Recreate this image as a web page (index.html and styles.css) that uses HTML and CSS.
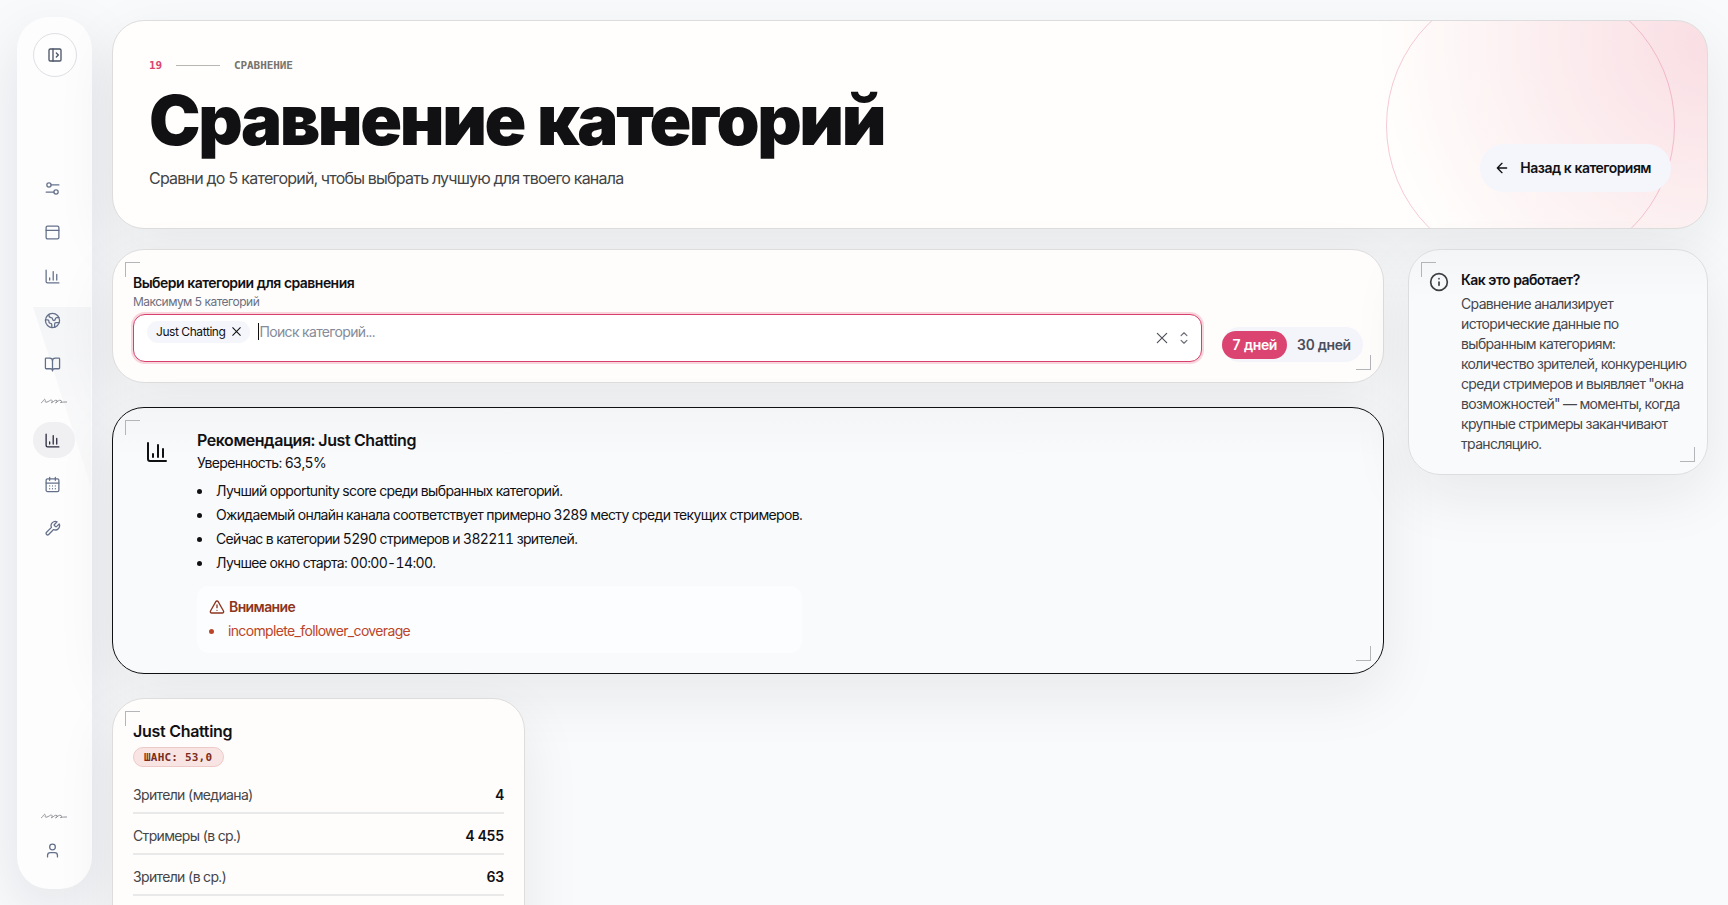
FILE: index.html
```html
<!DOCTYPE html>
<html lang="ru">
  <head>
    <meta charset="UTF-8" />
    <meta name="viewport" content="width=device-width, initial-scale=1.0" />
    <title>Сравнение категорий</title>
    <link rel="stylesheet" href="styles.css">
  </head>
  <body>
    <aside class="sidebar">
      <button class="toggle">
        <svg class="icon" viewBox="0 0 24 24"><rect x="3" y="3" width="18" height="18" rx="2" /><path d="M9 3v18M14 9l3 3-3 3" /></svg>
      </button>
      <nav class="nav">
        <a class="nav-item"><svg class="icon" viewBox="0 0 24 24"><path d="M10 7h11M3 17h11" /><circle cx="7" cy="7" r="3" /><circle cx="17" cy="17" r="3" /></svg></a>
        <a class="nav-item"><svg class="icon" viewBox="0 0 24 24"><rect x="3" y="3" width="18" height="18" rx="2" /><path d="M3 9h18" /></svg></a>
        <a class="nav-item"><svg class="icon" viewBox="0 0 24 24"><path d="M3 3v16a2 2 0 0 0 2 2h16M8 17v-3M13 17V5M18 17V9" /></svg></a>
        <a class="nav-item"><svg class="icon" viewBox="0 0 24 24"><path d="M21.54 15H17a2 2 0 0 0-2 2v4.54M7 3.34V5a3 3 0 0 0 3 3 2 2 0 0 1 2 2c0 1.1.9 2 2 2a2 2 0 0 0 2-2c0-1.1.9-2 2-2h3.17M11 21.95V18a2 2 0 0 0-2-2 2 2 0 0 1-2-2v-1a2 2 0 0 0-2-2H2.05" /><circle cx="12" cy="12" r="10" /></svg></a>
        <a class="nav-item"><svg class="icon" viewBox="0 0 24 24"><path d="M12 7v14M3 18a1 1 0 0 1-1-1V4a1 1 0 0 1 1-1h5a4 4 0 0 1 4 4 4 4 0 0 1 4-4h5a1 1 0 0 1 1 1v13a1 1 0 0 1-1 1h-6a3 3 0 0 0-3 3 3 3 0 0 0-3-3z" /></svg></a>
        <svg class="squiggle" viewBox="0 0 28 8"><path d="M1 6C3 5 4 1.500 5 2.500S4 6 7 5s4-3 5-1.500-2 3 0 2 3-3 5-2-3 3-1 2 3-3 5-2-2 2.500 0 2 3-.5 6-.5" /></svg>
        <a class="nav-item active"><svg class="icon" viewBox="0 0 24 24"><path d="M3 3v16a2 2 0 0 0 2 2h16M8 17v-3M13 17V5M18 17V9" /></svg></a>
        <a class="nav-item"><svg class="icon" viewBox="0 0 24 24"><rect x="3" y="4" width="18" height="18" rx="2" /><path d="M8 2v4M16 2v4M3 10h18M8 14h.01M12 14h.01M16 14h.01M8 18h.01M12 18h.01M16 18h.01" /></svg></a>
        <a class="nav-item"><svg class="icon" viewBox="0 0 24 24"><path d="M14.700 6.300a1 1 0 0 0 0 1.400l1.600 1.600a1 1 0 0 0 1.400 0l3.770-3.770a6 6 0 0 1-7.940 7.940l-6.910 6.910a2.120 2.120 0 0 1-3-3l6.910-6.910a6 6 0 0 1 7.940-7.940l-3.760 3.760z" /></svg></a>
      </nav>
      <div class="account">
        <svg class="squiggle" viewBox="0 0 28 8"><path d="M1 6C3 5 4 1.500 5 2.500S4 6 7 5s4-3 5-1.500-2 3 0 2 3-3 5-2-3 3-1 2 3-3 5-2-2 2.500 0 2 3-.5 6-.5" /></svg>
        <a class="nav-item"><svg class="icon" viewBox="0 0 24 24"><circle cx="12" cy="7" r="4" /><path d="M19 21v-2a4 4 0 0 0-4-4H9a4 4 0 0 0-4 4v2" /></svg></a>
      </div>
    </aside>

    <main class="page">
      <header class="hero">
        <div class="hero-text">
          <div class="eyebrow">
            <span class="eyebrow-number">19</span>
            <span class="eyebrow-line"></span>
            <span>СРАВНЕНИЕ</span>
          </div>
          <h1>Сравнение категорий</h1>
          <p>Сравни до 5 категорий, чтобы выбрать лучшую для твоего канала</p>
        </div>
        <button class="back">
          <svg class="icon" viewBox="0 0 24 24"><path d="M12 19l-7-7 7-7M19 12H5" /></svg>
          <span>Назад к категориям</span>
        </button>
      </header>

      <div class="columns">
        <div class="content">
          <section class="card picker">
            <div class="field">
              <label class="label">Выбери категории для сравнения</label>
              <div class="hint">Максимум 5 категорий</div>
              <div class="input">
                <div class="values">
                  <span class="chip">Just Chatting <svg class="icon" viewBox="0 0 24 24"><path d="M19 5L5 19M5 5l14 14" /></svg></span>
                  <span class="placeholder">Поиск категорий...</span>
                </div>
                <svg class="icon clear" viewBox="0 0 24 24"><path d="M20 4L4 20M4 4l16 16" /></svg>
                <svg class="icon chevrons" viewBox="0 0 24 24"><path d="M7 16l5 5 5-5M7 8l5-5 5 5" /></svg>
              </div>
            </div>
            <div class="segmented">
              <button class="segment selected">7 дней</button>
              <button class="segment">30 дней</button>
            </div>
          </section>

          <section class="card recommendation">
            <svg class="icon chart" viewBox="0 0 24 24"><path d="M3 3v16a2 2 0 0 0 2 2h16M8 17v-3M13 17V5M18 17V9" /></svg>
            <div class="advice">
              <h2>Рекомендация: Just Chatting</h2>
              <p class="confidence">Уверенность: 63,5%</p>
              <ul class="list">
                <li>Лучший opportunity score среди выбранных категорий.</li>
                <li>Ожидаемый онлайн канала соответствует примерно 3289 месту среди текущих стримеров.</li>
                <li>Сейчас в категории 5290 стримеров и 382211 зрителей.</li>
                <li>Лучшее окно старта: 00:00-14:00.</li>
              </ul>
              <div class="warning">
                <div class="warning-title">
                  <svg class="icon" viewBox="0 0 24 24"><path d="M21.730 18l-8-14a2 2 0 0 0-3.480 0l-8 14A2 2 0 0 0 4 21h16a2 2 0 0 0 1.730-3zM12 9v4M12 17h.01" /></svg>
                  <span>Внимание</span>
                </div>
                <ul class="list">
                  <li>incomplete_follower_coverage</li>
                </ul>
              </div>
            </div>
          </section>

          <section class="card category">
            <h2>Just Chatting</h2>
            <span class="badge">ШАНС: 53,0</span>
            <div class="row"><span>Зрители (медиана)</span><b>4</b></div>
            <div class="row"><span>Стримеры (в ср.)</span><b>4 455</b></div>
            <div class="row"><span>Зрители (в ср.)</span><b>63</b></div>
          </section>
        </div>

        <aside class="card info">
          <svg class="icon" viewBox="0 0 24 24"><circle cx="12" cy="12" r="10" /><path d="M12 16v-4M12 8h.01" /></svg>
          <div>
            <h3>Как это работает?</h3>
            <p>Сравнение анализирует исторические данные по выбранным категориям: количество зрителей, конкуренцию среди стримеров и выявляет "окна возможностей" — моменты, когда крупные стримеры заканчивают трансляцию.</p>
          </div>
        </aside>
      </div>
    </main>
  </body>
</html>
```

FILE: styles.css
```css
* {
  margin: 0;
  padding: 0;
  box-sizing: border-box;
}

body {
  display: flex;
  height: 905px;
  overflow: hidden;
  background-color: #f9fafc;
  color: #111114;
  font-family: Inter, sans-serif;
  font-size: 14px;
  font-variant-numeric: tabular-nums;
  letter-spacing: -0.65px;
}

button {
  border: none;
  font: inherit;
  letter-spacing: inherit;
  color: inherit;
  cursor: pointer;
}

ul {
  list-style: none;
}

.icon {
  width: 16px;
  height: 16px;
  flex-shrink: 0;
  fill: none;
  stroke: currentColor;
  stroke-width: 2;
  stroke-linecap: round;
  stroke-linejoin: round;
}

/* Sidebar */
.sidebar {
  position: relative;
  display: flex;
  flex-direction: column;
  flex-shrink: 0;
  width: 75px;
  height: 872px;
  margin: 17px 20px 0 17px;
  padding: 16px 16px 21px;
  border-radius: 32px;
  background-color: #fdfdfe;
  box-shadow: 0 20px 60px rgba(20, 20, 25, 0.1);
}

/* faint diagonal glare */
.sidebar::before {
  content: '';
  position: absolute;
  top: 290px;
  left: 16px;
  width: 58px;
  height: 180px;
  background: linear-gradient(#f4f5f7, #fafafb);
  clip-path: polygon(0 0, 100% 0, 100% 100%);
}

.toggle {
  display: flex;
  align-items: center;
  justify-content: center;
  width: 44px;
  height: 44px;
  border: 1px solid #dfe0e4;
  border-radius: 50%;
  background-color: #fefefe;
  color: #4b5566;
}

.nav {
  position: relative;
  display: flex;
  flex-direction: column;
  margin-top: 93px;
}

.nav-item {
  display: flex;
  align-items: center;
  justify-content: center;
  width: 42px;
  height: 36px;
  margin-bottom: 8px;
  padding-right: 3px;
  border-radius: 18px;
  color: #64708a;
}

.nav-item .icon {
  width: 17px;
  height: 17px;
  stroke-width: 1.8;
}

.active {
  background-color: #f0f0f2;
  color: #26263a;
}

.squiggle {
  width: 28px;
  height: 8px;
  margin: 8px 7px 12px;
  fill: none;
  stroke: #85868c;
  stroke-width: 0.9;
}

.nav .squiggle {
  margin: 7px 7px 17px;
}

.account {
  display: flex;
  flex-direction: column;
  margin-top: auto;
}

.account .nav-item {
  margin-bottom: 0;
}

/* Page */
.page {
  width: 1596px;
  padding-top: 20px;
}

.hero {
  position: relative;
  display: flex;
  align-items: flex-end;
  justify-content: space-between;
  height: 209px;
  padding: 36px;
  border: 1px solid #dedddd;
  border-radius: 32px;
  overflow: hidden;
  background: radial-gradient(circle at 100% 10%, rgba(222, 66, 110, 0.17), transparent 330px), #fffefc;
}

.hero::before {
  content: '';
  position: absolute;
  top: -40px;
  right: 32px;
  width: 287px;
  height: 287px;
  border: 1px solid rgba(219, 68, 112, 0.28);
  border-radius: 50%;
}

.hero,
.card {
  box-shadow: 0 20px 60px rgba(20, 20, 25, 0.08);
}

.eyebrow {
  display: flex;
  align-items: center;
  height: 16px;
  color: #77746f;
  font-family: 'DejaVu Sans Mono', monospace;
  font-size: 11px;
  font-weight: 700;
  letter-spacing: -0.1px;
}

.eyebrow-number {
  color: #db4470;
}

.eyebrow-line {
  width: 44px;
  height: 1px;
  margin: 0 14px;
  background-color: #b9b7b4;
}

h1 {
  margin: 14px 0 11px;
  font-size: 69px;
  font-weight: 900;
  line-height: 66px;
  letter-spacing: -2.4px;
  word-spacing: -3px;
}

.hero p {
  color: #444;
  font-size: 16px;
  line-height: 28px;
  letter-spacing: -0.76px;
}

.back {
  position: relative;
  display: flex;
  align-items: center;
  gap: 10px;
  height: 48px;
  padding: 0 20px 1px 14px;
  border-radius: 24px;
  background-color: #f4f6fb;
  font-weight: 600;
  letter-spacing: -0.53px;
}

.columns {
  display: flex;
  align-items: flex-start;
  gap: 24px;
  margin-top: 20px;
}

.content {
  width: 1272px;
}

.card {
  position: relative;
  border: 1px solid #dedddd;
  border-radius: 32px;
  background-color: #fffdfb;
}

/* corner marks */
.card::before,
.card::after {
  content: '';
  position: absolute;
  width: 14px;
  height: 14px;
}

.card::before {
  top: 12px;
  left: 12px;
  border-top: 1px solid #b4b5b8;
  border-left: 1px solid #b4b5b8;
}

.card::after {
  right: 12px;
  bottom: 12px;
  border-right: 1px solid #b4b5b8;
  border-bottom: 1px solid #b4b5b8;
}

/* Category picker */
.picker {
  display: flex;
  align-items: flex-end;
  gap: 20px;
  height: 134px;
  padding: 0 20px 20px;
}

.field {
  flex: 1;
}

.label {
  display: block;
  margin-bottom: 1px;
  font-weight: 600;
  line-height: 20px;
  letter-spacing: -0.54px;
}

.hint {
  margin-bottom: 4px;
  color: #6b7080;
  font-size: 12px;
  line-height: 16px;
  letter-spacing: -0.52px;
}

.input {
  display: flex;
  align-items: center;
  height: 48px;
  padding: 0 10px 0 13px;
  border: 1px solid #d6406c;
  border-radius: 12px;
  box-shadow: 0 0 0 2px #f9d5de;
  background-color: #fff;
}

.values {
  display: flex;
  align-items: center;
  flex: 1;
  height: 33px;
  align-self: flex-start;
}

.chip {
  display: flex;
  align-items: center;
  gap: 5px;
  height: 22px;
  padding: 0 7px 0 9px;
  border-radius: 11px;
  background-color: #f5f6fb;
  font-size: 12px;
  letter-spacing: -0.42px;
}

.chip .icon {
  width: 13px;
  height: 13px;
}

.placeholder {
  margin-left: 8px;
  border-left: 1px solid #111;
  color: #858b98;
  line-height: 17px;
}

.clear {
  width: 14px;
  height: 14px;
  margin-right: 8px;
  color: #4d4f58;
}

.chevrons {
  width: 14px;
  height: 14px;
  color: #6b6d75;
}

.segmented {
  display: flex;
  align-items: center;
  width: 141px;
  height: 35px;
  border-radius: 18px;
  background-color: #f4f5fb;
}

.segment {
  height: 28px;
  padding: 0 10px 1px;
  border-radius: 14px;
  background: none;
  color: #4b4d59;
  font-weight: 600;
  letter-spacing: -0.4px;
}

.selected {
  background-color: #db4470;
  color: #fff;
}

/* Recommendation */
.recommendation {
  display: flex;
  gap: 28px;
  height: 267px;
  margin-top: 24px;
  padding: 20px 32px;
  border-color: #111114;
  background: linear-gradient(#f4f5f7, #f9fafc 50px);
}

.chart {
  width: 24px;
  height: 24px;
  margin-top: 12px;
}

h2 {
  font-size: 16px;
  font-weight: 600;
  line-height: 24px;
  letter-spacing: -0.32px;
}

.advice h2 {
  letter-spacing: -0.44px;
}

.confidence {
  line-height: 22px;
}

.advice > .list {
  margin-top: 5px;
}

.list li {
  position: relative;
  padding-left: 19px;
  line-height: 24px;
}

.list li::before {
  content: '';
  position: absolute;
  top: 10px;
  left: 0;
  width: 5px;
  height: 5px;
  border-radius: 50%;
  background-color: currentColor;
}

.warning {
  margin-top: 11px;
  padding: 9px 12px;
  height: 67px;
  border-radius: 12px;
  background-color: #fcfdfe;
  color: #bb4528;
}

.warning-title {
  display: flex;
  align-items: center;
  gap: 4px;
  color: #8c3520;
  font-weight: 600;
  line-height: 24px;
  letter-spacing: -0.6px;
}

/* Category card */
.category {
  width: 413px;
  height: 400px;
  margin-top: 24px;
  padding: 20px;
}

.badge {
  display: flex;
  align-items: center;
  width: 91px;
  height: 20px;
  margin: 4px 0 6px;
  padding-left: 10px;
  border: 1px solid #edc9c7;
  border-radius: 10px;
  background-color: #f8e5e3;
  color: #7c2d20;
  font-family: 'DejaVu Sans Mono', monospace;
  font-size: 11px;
  font-weight: 700;
  letter-spacing: 0.2px;
}

.row {
  display: flex;
  align-items: center;
  justify-content: space-between;
  height: 41px;
  padding-top: 3px;
  border-bottom: 2px solid #e9e9ea;
  color: #444549;
}

.row b {
  color: #111114;
  font-weight: 600;
  letter-spacing: -0.3px;
}

/* Info card */
.info {
  display: flex;
  gap: 12px;
  width: 300px;
  height: 226px;
  padding: 20px;
  background: linear-gradient(#f4f5f7, #f9fafc 50px);
}

.info .icon {
  width: 20px;
  height: 20px;
  margin-top: 2px;
  color: #3d3e42;
}

h3 {
  margin-bottom: 4px;
  font-size: 14px;
  font-weight: 600;
  line-height: 20px;
  letter-spacing: -0.56px;
}

.info p {
  color: #46474c;
  line-height: 20px;
}
```
